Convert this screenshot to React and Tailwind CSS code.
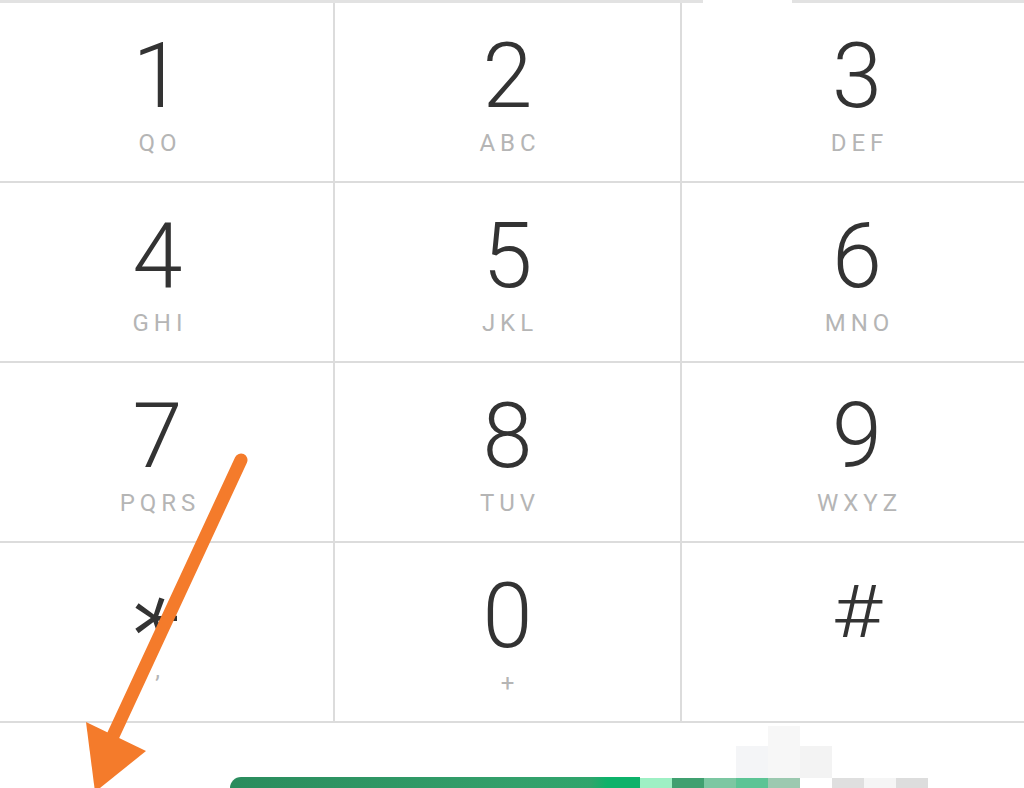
import React from "react";

const keys = [
  { d: "1", l: "QO" },
  { d: "2", l: "ABC" },
  { d: "3", l: "DEF" },
  { d: "4", l: "GHI" },
  { d: "5", l: "JKL" },
  { d: "6", l: "MNO" },
  { d: "7", l: "PQRS" },
  { d: "8", l: "TUV" },
  { d: "9", l: "WXYZ" },
  { d: "*", l: "," },
  { d: "0", l: "+" },
  { d: "#", l: "" },
];

// mosaic blocks at the bottom right (top faint part, bottom colour)
const blocks = [
  { top: "", topH: "h-0", c: "bg-[#9ef0c4]" },
  { top: "", topH: "h-0", c: "bg-[#40a070]" },
  { top: "", topH: "h-0", c: "bg-[#7cc7a2]" },
  { top: "bg-[#f4f5f7]", topH: "h-[32px]", c: "bg-[#5cc495]" },
  { top: "bg-[#f7f7f7]", topH: "h-[52px]", c: "bg-[#9cc9b0]" },
  { top: "bg-[#f3f3f3]", topH: "h-[32px]", c: "bg-white" },
  { top: "", topH: "h-0", c: "bg-[#dfdfdf]" },
  { top: "", topH: "h-0", c: "bg-[#f5f5f5]" },
  { top: "", topH: "h-0", c: "bg-[#dddddd]" },
];

function Key({ k, col }) {
  const shift = col === 0 ? "pr-[18px]" : col === 2 ? "pl-[8px]" : "";
  return (
    <div
      className={`h-[180px] border-b-2 border-[#dcdcdc] flex flex-col items-center pt-[29px] ${shift} ${
        col < 2 ? "border-r-2" : ""
      }`}
    >
      {k.d === "*" ? (
        <div className="h-[90px] pt-[40px]">
          <div className="text-[104px] leading-[50px] font-light text-[#333] rotate-90 origin-[50%_6px]">*</div>
        </div>
      ) : k.d === "#" ? (
        <div className="text-[72px] leading-[90px] h-[90px] font-light text-[#333] scale-x-[1.2] translate-y-[-4px]">#</div>
      ) : (
        <div className="text-[90px] leading-none h-[90px] font-light text-[#333]">{k.d}</div>
      )}
      <div
        className={`text-[24px] leading-none tracking-[5px] pl-[5px] text-[#b5b5b5] ${
          k.d === "*" ? "mt-[-4px]" : "mt-[9px]"
        }`}
      >
        {k.l}
      </div>
    </div>
  );
}

export default function App() {
  return (
    <div
      className="relative w-[1024px] h-[788px] overflow-hidden bg-white"
      style={{ fontFamily: "Roboto, 'Liberation Sans', sans-serif" }}
    >
      {/* top strip */}
      <div className="flex h-[3px]">
        <div className="w-[703px] bg-[#e2e2e2]" />
        <div className="w-[89px]" />
        <div className="flex-1 bg-[#e2e2e2]" />
      </div>

      {/* keypad */}
      <div className="grid grid-cols-[335px_347px_1fr]">
        {keys.map((k, i) => (
          <Key key={i} k={k} col={i % 3} />
        ))}
      </div>

      {/* bottom call bar, partly pixelated */}
      <div className="flex items-end h-[65px]">
        <div className="w-[230px]" />
        <div className="w-[410px] h-[11px] rounded-tl-[14px] bg-[linear-gradient(to_right,#2a8c5d_0%,#33a06b_70%,#2fa56c_88%,#0db26a_92%)]" />
        {blocks.map((b, i) => (
          <div key={i} className="w-[32px] flex flex-col">
            <div className={`${b.topH} ${b.top}`} />
            <div className={`h-[10px] ${b.c}`} />
          </div>
        ))}
      </div>

      {/* annotation arrow */}
      <svg className="absolute inset-0" width="1024" height="788" viewBox="0 0 1024 788">
        <line x1="241" y1="460" x2="112" y2="738" stroke="#f47b2b" strokeWidth="13" strokeLinecap="round" />
        <polygon points="86,722 146,751 95,792" fill="#f47b2b" />
      </svg>
    </div>
  );
}
